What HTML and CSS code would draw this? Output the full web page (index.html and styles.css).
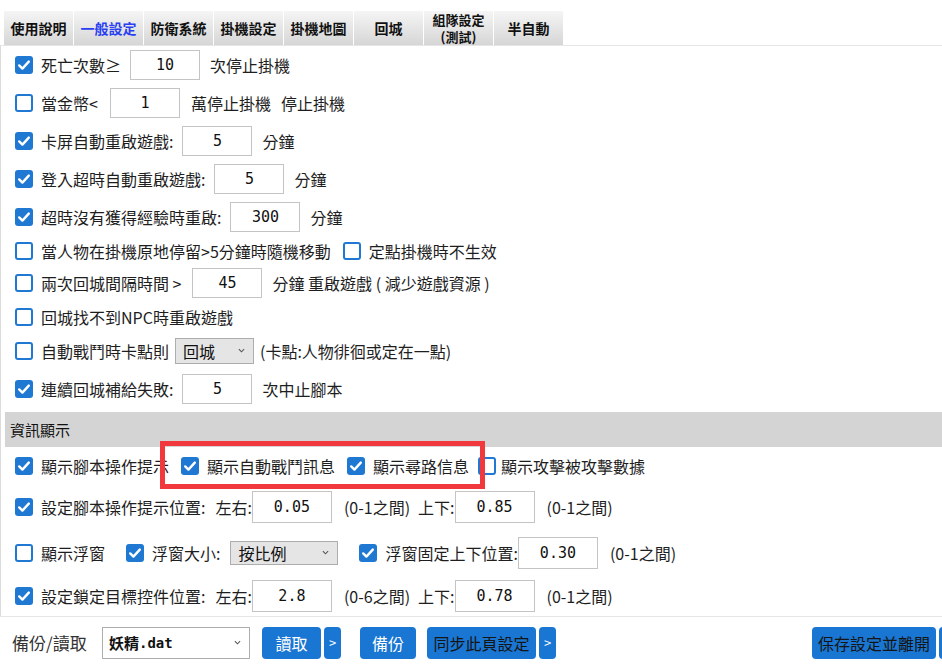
FILE: index.html
```html
<!DOCTYPE html>
<html lang="zh-Hant">
<head>
    <meta charset="UTF-8">
    <meta name="viewport" content="width=device-width, initial-scale=1.0">
    <title>一般設定</title>
    <link rel="stylesheet" href="styles.css">
</head>
<body>
<div class="page">
    <div class="tabs">
        <div class="tab">使用說明</div>
        <div class="tab active">一般設定</div>
        <div class="tab">防衛系統</div>
        <div class="tab">掛機設定</div>
        <div class="tab">掛機地圖</div>
        <div class="tab">回城</div>
        <div class="tab tab-two"><span>組隊設定</span><span>(測試)</span></div>
        <div class="tab">半自動</div>
    </div>

    <div class="panel">
        <div class="row">
            <span class="cb on"><svg viewBox="0 0 18 18"><path d="M4.2 9.4l3.2 3.2 6.4-7"/></svg></span>
            <span class="lbl">死亡次數≥</span>
            <input class="num" value="10">
            <span>次停止掛機</span>
        </div>
        <div class="row">
            <span class="cb"></span>
            <span class="lbl">當金幣&lt;</span>
            <input class="num num-gold" value="1">
            <span>萬停止掛機</span>
            <span class="gap">停止掛機</span>
        </div>
        <div class="row">
            <span class="cb on"><svg viewBox="0 0 18 18"><path d="M4.2 9.4l3.2 3.2 6.4-7"/></svg></span>
            <span class="lbl">卡屏自動重啟遊戲:</span>
            <input class="num" value="5">
            <span>分鐘</span>
        </div>
        <div class="row">
            <span class="cb on"><svg viewBox="0 0 18 18"><path d="M4.2 9.4l3.2 3.2 6.4-7"/></svg></span>
            <span class="lbl">登入超時自動重啟遊戲:</span>
            <input class="num" value="5">
            <span>分鐘</span>
        </div>
        <div class="row">
            <span class="cb on"><svg viewBox="0 0 18 18"><path d="M4.2 9.4l3.2 3.2 6.4-7"/></svg></span>
            <span class="lbl">超時沒有獲得經驗時重啟:</span>
            <input class="num" value="300">
            <span>分鐘</span>
        </div>
        <div class="row row-30">
            <span class="cb"></span>
            <span class="lbl">當人物在掛機原地停留&gt;5分鐘時隨機移動</span>
            <span class="cb next"></span>
            <span class="lbl">定點掛機時不生效</span>
        </div>
        <div class="row row-34">
            <span class="cb"></span>
            <span class="lbl">兩次回城間隔時間 &gt;</span>
            <input class="num num-wait" value="45">
            <span>分鐘 重啟遊戲 ( 減少遊戲資源 )</span>
        </div>
        <div class="row row-34">
            <span class="cb"></span>
            <span class="lbl">回城找不到NPC時重啟遊戲</span>
        </div>
        <div class="row row-34">
            <span class="cb"></span>
            <span class="lbl">自動戰鬥時卡點則</span>
            <div class="select sel-city">回城<svg class="caret" viewBox="0 0 8 5"><path d="M1 1l3 3 3-3"/></svg></div>
            <span>(卡點:人物徘徊或定在一點)</span>
        </div>
        <div class="row row-42">
            <span class="cb on"><svg viewBox="0 0 18 18"><path d="M4.2 9.4l3.2 3.2 6.4-7"/></svg></span>
            <span class="lbl">連續回城補給失敗:</span>
            <input class="num" value="5">
            <span>次中止腳本</span>
        </div>

        <div class="section">資訊顯示</div>

        <div class="row row-37">
            <span class="cb on"><svg viewBox="0 0 18 18"><path d="M4.2 9.4l3.2 3.2 6.4-7"/></svg></span>
            <span class="lbl">顯示腳本操作提示</span>
            <span class="cb on next"><svg viewBox="0 0 18 18"><path d="M4.2 9.4l3.2 3.2 6.4-7"/></svg></span>
            <span class="lbl">顯示自動戰鬥訊息</span>
            <span class="cb on next"><svg viewBox="0 0 18 18"><path d="M4.2 9.4l3.2 3.2 6.4-7"/></svg></span>
            <span class="lbl">顯示尋路信息</span>
            <span class="cb near"></span>
            <span class="lbl lbl-tight">顯示攻擊被攻擊數據</span>
        </div>
        <div class="row row-46">
            <span class="cb on"><svg viewBox="0 0 18 18"><path d="M4.2 9.4l3.2 3.2 6.4-7"/></svg></span>
            <span class="lbl">設定腳本操作提示位置:</span>
            <span class="axis">左右:</span>
            <input class="num wide" value="0.05">
            <span class="range">(0-1之間)</span>
            <span class="axis">上下:</span>
            <input class="num wide" value="0.85">
            <span class="range">(0-1之間)</span>
        </div>
        <div class="row row-46">
            <span class="cb"></span>
            <span class="lbl">顯示浮窗</span>
            <span class="cb on far"><svg viewBox="0 0 18 18"><path d="M4.2 9.4l3.2 3.2 6.4-7"/></svg></span>
            <span class="lbl">浮窗大小:</span>
            <div class="select sel-size">按比例<svg class="caret" viewBox="0 0 8 5"><path d="M1 1l3 3 3-3"/></svg></div>
            <span class="cb on far"><svg viewBox="0 0 18 18"><path d="M4.2 9.4l3.2 3.2 6.4-7"/></svg></span>
            <span class="lbl">浮窗固定上下位置:</span>
            <input class="num wide" value="0.30">
            <span class="range">(0-1之間)</span>
        </div>
        <div class="row row-40">
            <span class="cb on"><svg viewBox="0 0 18 18"><path d="M4.2 9.4l3.2 3.2 6.4-7"/></svg></span>
            <span class="lbl">設定鎖定目標控件位置:</span>
            <span class="axis">左右:</span>
            <input class="num wide" value="2.8">
            <span class="range">(0-6之間)</span>
            <span class="axis">上下:</span>
            <input class="num wide" value="0.78">
            <span class="range">(0-1之間)</span>
        </div>
    </div>

    <div class="bottom">
        <span class="bk-label">備份/讀取</span>
        <div class="select sel-file">妖精<span class="mono">.dat</span><svg class="caret" viewBox="0 0 8 5"><path d="M1 1l3 3 3-3"/></svg></div>
        <button class="btn btn-load">讀取</button>
        <button class="btn btn-more">&gt;</button>
        <button class="btn btn-backup">備份</button>
        <button class="btn btn-dark btn-sync">同步此頁設定</button>
        <button class="btn btn-more">&gt;</button>
        <button class="btn btn-dark btn-save">保存設定並離開</button>
        <button class="btn btn-end"></button>
    </div>

    <!-- highlight drawn over the screenshot -->
    <div class="mark"></div>
</div>
</body>
</html>
```

FILE: styles.css
```css
body {
    margin: 0;
    font-family: "Noto Sans CJK TC", "Noto Sans", sans-serif;
    font-size: 16px;
    color: #1e1e1e;
    background-color: white;
}

.page {
    position: relative;
    width: 942px;
    height: 666px;
    overflow: hidden;
}

/* tabs */
.tabs {
    display: flex;
    margin: 11px 0 0 4px;
}

.tab {
    width: 69px;
    height: 34px;
    border-right: 1px solid white;
    background: linear-gradient(#f5f5f5, #d6d6d6);
    display: flex;
    align-items: center;
    justify-content: center;
    text-align: center;
    font-size: 14px;
    font-weight: bold;
    line-height: 16px;
    color: #111;
}

.tab-two {
    flex-direction: column;
    font-size: 13px;
}

.tab-two span {
    display: block;
    height: 17px;
    line-height: 17px;
}

.tab.active {
    color: #2a3ff2;
}

/* main panel */
.panel {
    border-top: 1px solid #e6e6e6;
    border-left: 1px solid #dcdcdc;
    padding-left: 14px;
}

.row {
    display: flex;
    align-items: center;
    height: 38px;
    white-space: nowrap;
}

.row-30 { height: 30px; }
.row-34 { height: 34px; }
.row-37 { height: 37px; }
.row-40 { height: 40px; }
.row-42 { height: 42px; }
.row-46 { height: 46px; }

.cb {
    width: 18px;
    height: 18px;
    box-sizing: border-box;
    border: 2px solid #1f78d1;
    border-radius: 3px;
    background-color: white;
    flex: none;
    display: flex;
}

.cb.on {
    background-color: #1f78d1;
    border: none;
}

.cb svg {
    width: 18px;
    height: 18px;
}

.cb svg path {
    fill: none;
    stroke: white;
    stroke-width: 2.4;
    stroke-linecap: round;
    stroke-linejoin: round;
}

.cb.next {
    margin-left: 12px;
}

.cb.near {
    margin-left: 9px;
}

.cb.far {
    margin-left: 21px;
}

.lbl {
    margin-left: 8px;
}

.lbl-tight {
    margin-left: 5px;
}

.gap {
    margin-left: 10px;
}

.num {
    width: 70px;
    height: 30px;
    box-sizing: border-box;
    margin: 0 10px 0 9px;
    padding: 0;
    border: 1px solid #c4c4c4;
    background-color: white;
    font-family: "DejaVu Sans Mono", monospace;
    font-size: 15px;
    text-align: center;
    color: #111;
    outline: none;
}

.num-gold {
    margin: 0 11px 0 12px;
}

.num-wait {
    margin-left: 11px;
}

.num.wide {
    width: 80px;
    height: 32px;
    margin: 0 12px 0 0;
}

.axis {
    margin-left: 10px;
}

.range + .axis {
    margin-left: -2px;
    margin-right: 0;
}

.range {
    margin-right: 10px;
}

/* select boxes */
.select {
    position: relative;
    box-sizing: border-box;
    display: flex;
    align-items: center;
    padding-left: 7px;
    border: 1px solid #adadad;
    background-color: #e5e5e5;
    font-size: 16px;
    color: #111;
}

.caret {
    position: absolute;
    right: 8px;
    top: 50%;
    width: 7px;
    height: 5px;
    margin-top: -3px;
}

.caret path {
    fill: none;
    stroke: #555;
    stroke-width: 1.2;
}

.sel-city {
    width: 79px;
    height: 26px;
    margin: 0 6px;
}

.sel-size {
    width: 108px;
    height: 24px;
    margin-left: 10px;
}

/* section header */
.section {
    margin: 2px 0 0 -10px;
    height: 35px;
    padding-left: 5px;
    display: flex;
    align-items: center;
    background-color: #d4d4d4;
    font-size: 15px;
    color: #111;
}

/* bottom bar */
.bottom {
    width: 960px;
    height: 49px;
    box-sizing: border-box;
    padding: 3px 0 0 12px;
    border-top: 1px solid #e6e6e6;
    display: flex;
    align-items: center;
}

.bk-label {
    font-size: 17px;
    color: #333;
    width: 90px;
}

.sel-file {
    width: 148px;
    height: 32px;
    background-color: white;
    font-size: 15px;
    font-weight: bold;
    padding-left: 6px;
}

.mono {
    font-family: "DejaVu Sans Mono", monospace;
    font-size: 14px;
}

.btn {
    height: 32px;
    padding: 0 6px;
    border: none;
    border-radius: 4px;
    background-color: #1976d2;
    color: white;
    font-family: inherit;
    font-size: 16px;
    cursor: pointer;
}

.btn-load {
    width: 59px;
    margin-left: 12px;
}

.btn-more {
    width: 17px;
    padding: 0;
    margin-left: 3px;
    font-size: 13px;
}

.btn-backup {
    width: 56px;
    margin-left: 19px;
}

.btn-dark {
    color: #151515;
}

.btn-sync {
    width: 109px;
    margin-left: 11px;
    padding: 0 4px;
}

.btn-save {
    width: 124px;
    margin-left: auto;
}

.btn-end {
    width: 21px;
    margin-left: 3px;
}

/* red highlight box */
.mark {
    position: absolute;
    left: 160px;
    top: 441px;
    width: 325px;
    height: 48px;
    box-sizing: border-box;
    border: 5px solid #f0383d;
}
```
